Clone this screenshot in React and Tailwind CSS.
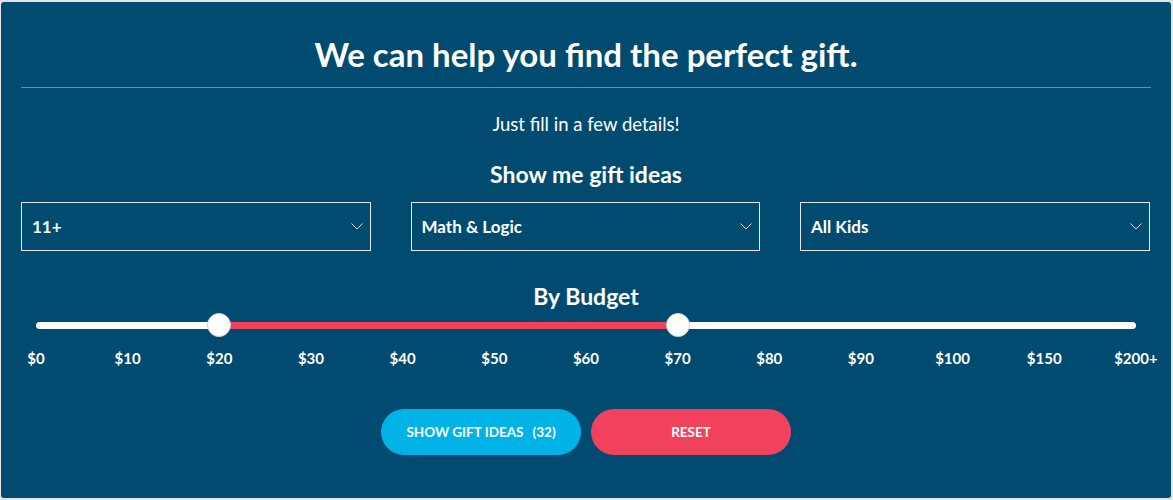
import React from 'react';

const selects = ['11+', 'Math & Logic', 'All Kids'];
const labels = ['$0', '$10', '$20', '$30', '$40', '$50', '$60', '$70', '$80', '$90', '$100', '$150', '$200+'];

const Chevron = () => (
  <svg width="12" height="7" viewBox="0 0 12 7" fill="none" className="shrink-0">
    <path d="M0.5 0.5 L6 6 L11.5 0.5" stroke="#d9dee3" strokeWidth="1" />
  </svg>
);

const SelectBox = ({ value }) => (
  <div className="w-[349.5px] h-[49px] border border-[#e6e9ec] flex items-center justify-between pl-[10px] pr-[7px]">
    <span className="text-[17px] font-bold text-white">{value}</span>
    <Chevron />
  </div>
);

const BudgetSlider = () => (
  <div className="mx-[15px]">
    <div className="relative h-[28px] flex items-center">
      <div className="w-full h-[7px] rounded-full bg-white" />
      <div className="absolute left-[16.667%] right-[41.667%] h-[7px] bg-[#f2415d]" />
      <div className="absolute left-[16.667%] -ml-[12px] w-[24px] h-[24px] rounded-full bg-white border border-[#cfd4d8]" />
      <div className="absolute left-[58.333%] -ml-[12px] w-[24px] h-[24px] rounded-full bg-white border border-[#cfd4d8]" />
    </div>
    <div className="flex justify-between mt-[9px]">
      {labels.map((l) => (
        <div key={l} className="w-0 flex justify-center">
          <span className="text-[15px] leading-[20px] font-bold text-white whitespace-nowrap">{l}</span>
        </div>
      ))}
    </div>
  </div>
);

export default function App() {
  return (
    <div className="bg-[#e4e4e4] pl-[1px] pr-[2px] pt-[2px] pb-[2px] w-[1173px] h-[500px]" style={{ fontFamily: 'Lato, "Open Sans", sans-serif' }}>
      <div className="bg-[#014b70] rounded-[3px] h-full px-[20px] pt-[32px] text-white">
        <h1 className="text-[33px] leading-[40px] font-bold text-center pb-[13px] border-b border-[#2aa3d6]">
          We can help you find the perfect gift.
        </h1>
        <p className="mt-[24px] text-[18.5px] leading-[24px] text-center">Just fill in a few details!</p>
        <h2 className="mt-[23px] text-[23px] leading-[30px] font-bold text-center">Show me gift ideas</h2>
        <div className="mt-[13px] flex gap-[40px]">
          {selects.map((s) => (
            <SelectBox key={s} value={s} />
          ))}
        </div>
        <h2 className="mt-[30px] text-[23px] leading-[30px] font-bold text-center">By Budget</h2>
        <BudgetSlider />
        <div className="mt-[41px] flex justify-center gap-[10px]">
          <button className="w-[200px] h-[46px] rounded-full bg-[#00b3e7] text-[13.5px] font-bold uppercase text-white flex items-center justify-center gap-[9px] pt-[1px]">
            <span>Show gift ideas</span>
            <span>(32)</span>
          </button>
          <button className="w-[200px] h-[46px] rounded-full bg-[#f2415d] text-[13.5px] font-bold uppercase text-white pt-[1px]">
            Reset
          </button>
        </div>
      </div>
    </div>
  );
}
